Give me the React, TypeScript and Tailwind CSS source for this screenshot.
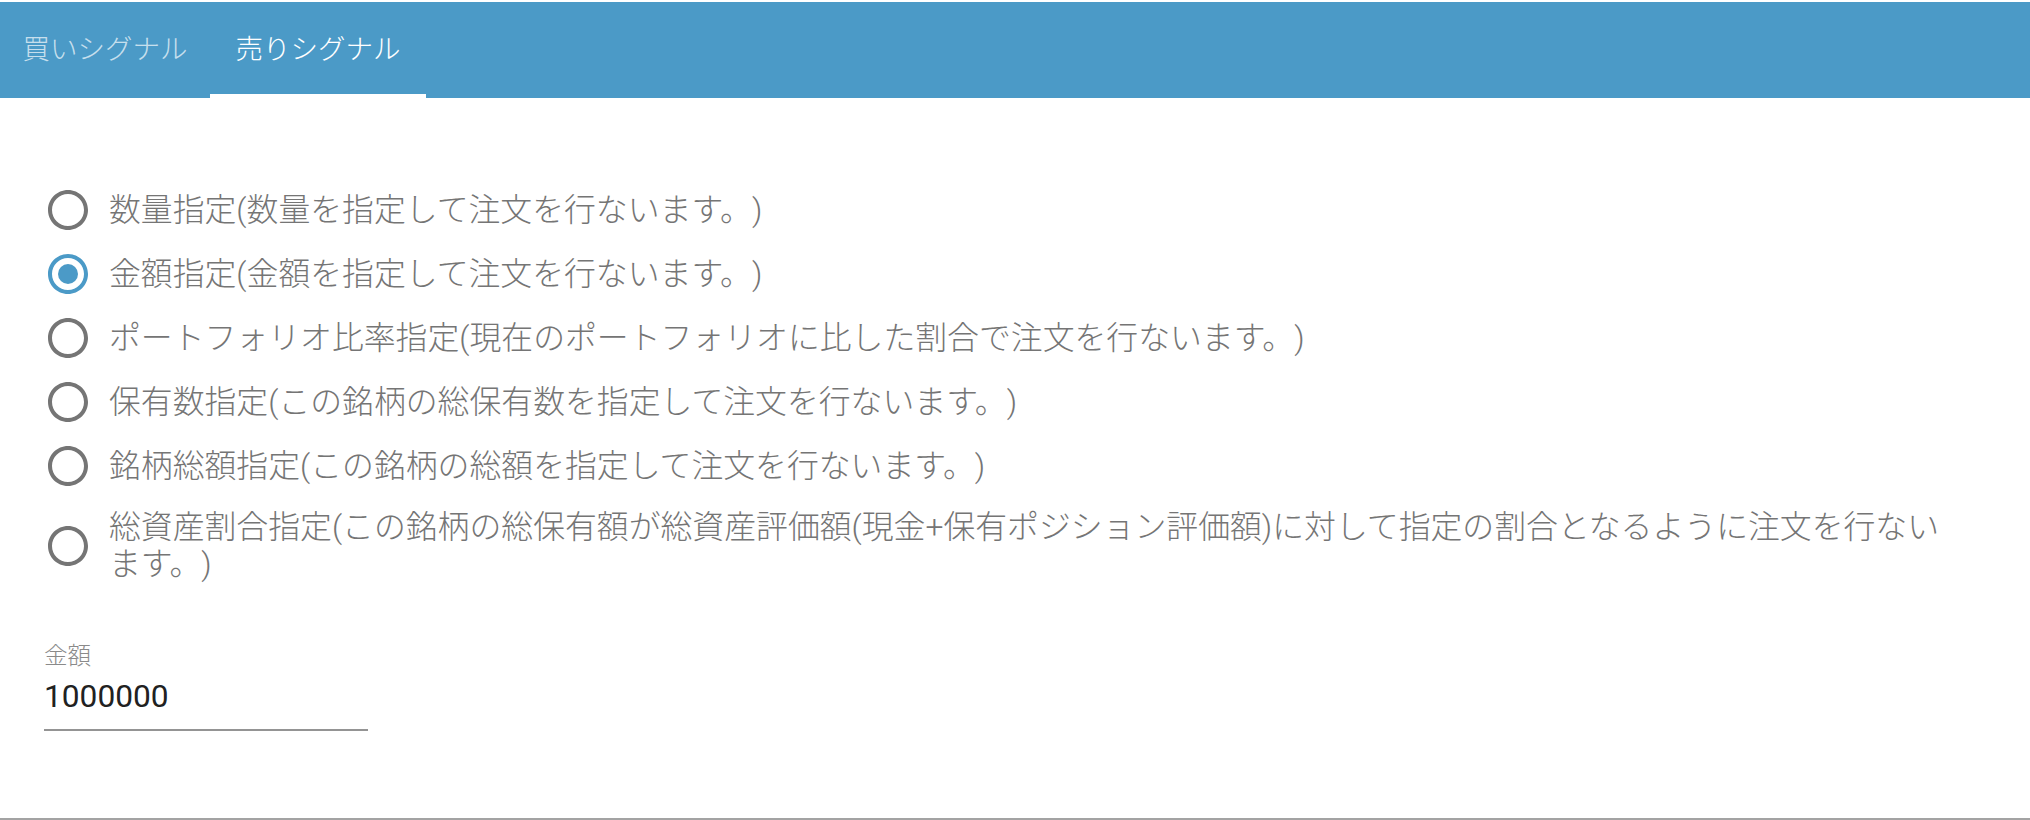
import React from "react";

const options = [
  "数量指定(数量を指定して注文を行ないます。)",
  "金額指定(金額を指定して注文を行ないます。)",
  "ポートフォリオ比率指定(現在のポートフォリオに比した割合で注文を行ないます。)",
  "保有数指定(この銘柄の総保有数を指定して注文を行ないます。)",
  "銘柄総額指定(この銘柄の総額を指定して注文を行ないます。)",
  "総資産割合指定(この銘柄の総保有額が総資産評価額(現金+保有ポジション評価額)に対して指定の割合となるように注文を行ないます。)",
];

function RadioIcon({ checked }: { checked: boolean }) {
  return (
    <svg viewBox="0 0 24 24" className={checked ? "w-[48px] h-[48px] shrink-0 text-[#4b9ac7]" : "w-[48px] h-[48px] shrink-0 text-[#757575]"} fill="currentColor">
      <path d="M12 2C6.48 2 2 6.48 2 12s4.48 10 10 10 10-4.48 10-10S17.52 2 12 2zm0 18c-4.42 0-8-3.58-8-8s3.58-8 8-8 8 3.58 8 8-3.58 8-8 8z" />
      {checked && <circle cx="12" cy="12" r="5" />}
    </svg>
  );
}

export default function App() {
  return (
    <div className="h-[820px] w-full bg-white pt-[2px] flex flex-col font-[Roboto,'Noto_Sans_CJK_JP',sans-serif] [text-spacing-trim:space-all]">
      <div className="h-[96px] bg-[#4b9ac7] flex items-stretch shrink-0">
        <div className="w-[210px] flex items-center justify-center text-[27.5px] font-light text-white/70">買いシグナル</div>
        <div className="w-[216px] relative flex items-center justify-center text-[27.5px] font-light text-white">
          売りシグナル
          <span className="absolute left-0 right-0 bottom-0 h-[4px] bg-white" />
        </div>
      </div>
      <div className="flex-1 border-b-2 border-[#a3a3a3] px-[44px] pt-[80px]">
        <div className="flex flex-col">
          {options.map((o, i) => (
            <div key={i} className="flex items-center min-h-[64px]">
              <RadioIcon checked={i === 1} />
              <span className="ml-[17px] mr-[16px] py-[11px] leading-[37px] text-[31.85px] font-light text-[#757575]">{o}</span>
            </div>
          ))}
        </div>
        <div className="w-[324px] mt-[51px]">
          <label className="block text-[23.6px] leading-none font-light text-[#8a8a8a]">金額</label>
          <div className="pt-[9px] pb-[14px] text-[31.7px] leading-[37px] text-[#212121] border-b-2 border-[#949494]">1000000</div>
        </div>
      </div>
    </div>
  );
}
